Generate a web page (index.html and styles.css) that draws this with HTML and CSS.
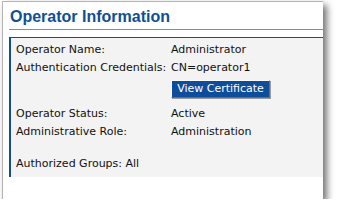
FILE: index.html
```html
<!DOCTYPE html>
<html>
<head>
<meta charset="utf-8">
<link rel="stylesheet" href="styles.css">
</head>
<body>
<div class="window">
  <div class="header"><h1 class="title">Operator Information</h1></div>
  <div class="panel">
    <div class="row"><span class="label">Operator Name:</span><span class="value">Administrator</span></div>
    <div class="row"><span class="label">Authentication Credentials:</span><span class="value">CN=operator1</span></div>
    <div class="row btn-row"><span class="label"></span><span class="value"><button class="btn">View Certificate</button></span></div>
    <div class="row status-row"><span class="label">Operator Status:</span><span class="value">Active</span></div>
    <div class="row"><span class="label">Administrative Role:</span><span class="value">Administration</span></div>
    <div class="row groups-row"><span class="full">Authorized Groups: All</span></div>
  </div>
</div>
</body>
</html>
```
FILE: styles.css
```css
html, body {
  margin: 0;
  padding: 0;
  background: #ffffff;
}
.window {
  margin: 1px 0 0 2px;
  width: 320px;
  height: 197px;
  background: #ffffff;
  border-left: 1px solid #b4b4b4;
  border-top: 1px solid #b4b4b4;
  box-shadow: 4px 4px 7px rgba(0, 0, 0, 0.55);
  box-sizing: content-box;
}
.header {
  margin-left: 6px;
  height: 28px;
  border-bottom: 1px solid #8c8c8c;
  box-sizing: border-box;
}
.title {
  margin: 0;
  padding: 5px 0 0 1px;
  font-family: "Liberation Sans", Arial, sans-serif;
  font-weight: bold;
  font-size: 16px;
  line-height: 20px;
  color: #0f4f98;
}
.panel {
  margin: 7px 0 0 6px;
  height: 140px;
  background: #f3f3f3;
  border-top: 1px solid #0f4f98;
  border-left: 2px solid #0f4f98;
  padding: 3px 0 0 5px;
  box-sizing: border-box;
  font-family: "DejaVu Sans", Verdana, sans-serif;
  font-size: 11px;
  color: #111111;
}
.row {
  display: grid;
  grid-template-columns: 155px 1fr;
  line-height: 18px;
}
.btn-row {
  margin-top: 3px;
}
.btn {
  display: block;
  width: 99px;
  height: 18px;
  padding: 0 0 1px 0;
  background: #0d4d9c;
  color: #ffffff;
  border: 1px solid;
  border-color: #ffffff #6e6e6e #6e6e6e #ffffff;
  box-shadow: 1px 1px 0 #9a9a9a;
  font-family: "DejaVu Sans", Verdana, sans-serif;
  font-size: 11px;
  line-height: 15px;
  text-align: center;
}
.status-row {
  margin-top: 7px;
}
.groups-row {
  display: block;
  margin-top: 14px;
}
```
